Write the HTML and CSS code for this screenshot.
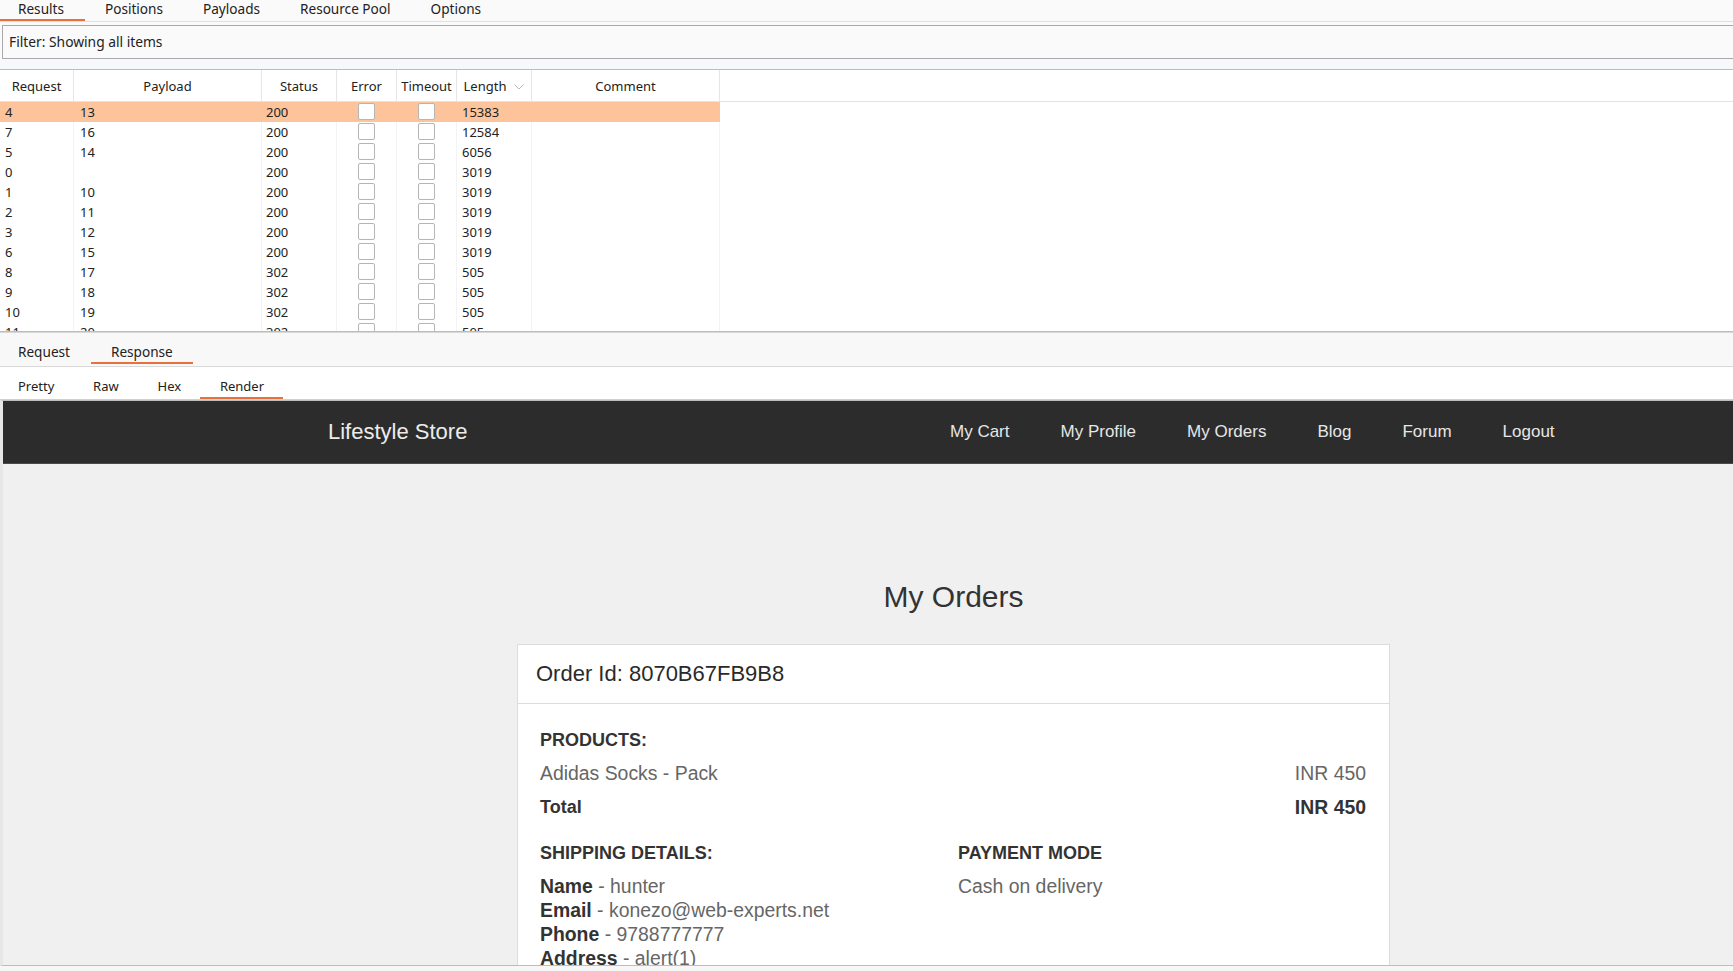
FILE: index.html
```html
<!DOCTYPE html>
<html lang="en">
<head>
<meta charset="utf-8">
<title>Intruder results</title>
<link rel="stylesheet" href="styles.css">
</head>
<body>
<div class="app">
  <div class="tabbar top-tabs">
    <span class="tab active">Results</span>
    <span class="tab">Positions</span>
    <span class="tab">Payloads</span>
    <span class="tab">Resource Pool</span>
    <span class="tab">Options</span>
  </div>
  <div class="filter-wrap">
    <div class="filter">Filter: Showing all items</div>
  </div>
  <div class="spacer"></div>
  <div class="table-wrap">
    <div class="thead">
      <div class="th">Request</div>
      <div class="th">Payload</div>
      <div class="th">Status</div>
      <div class="th">Error</div>
      <div class="th">Timeout</div>
      <div class="th">Length <svg class="chev" width="10" height="6" viewBox="0 0 10 6"><polyline points="0.5,0.5 5,5 9.5,0.5" fill="none" stroke="#b9b9b9" stroke-width="1"/></svg></div>
      <div class="th">Comment</div>
      <div class="th last"></div>
    </div>
    <div class="tbody">
      <div class="tr sel"><div class="td c-req">4</div><div class="td c-pay">13</div><div class="td c-st">200</div><div class="td c-cb"><span class="cb"></span></div><div class="td c-cb"><span class="cb"></span></div><div class="td c-len">15383</div><div class="td"></div></div>
      <div class="tr"><div class="td c-req">7</div><div class="td c-pay">16</div><div class="td c-st">200</div><div class="td c-cb"><span class="cb"></span></div><div class="td c-cb"><span class="cb"></span></div><div class="td c-len">12584</div><div class="td"></div></div>
      <div class="tr"><div class="td c-req">5</div><div class="td c-pay">14</div><div class="td c-st">200</div><div class="td c-cb"><span class="cb"></span></div><div class="td c-cb"><span class="cb"></span></div><div class="td c-len">6056</div><div class="td"></div></div>
      <div class="tr"><div class="td c-req">0</div><div class="td c-pay"></div><div class="td c-st">200</div><div class="td c-cb"><span class="cb"></span></div><div class="td c-cb"><span class="cb"></span></div><div class="td c-len">3019</div><div class="td"></div></div>
      <div class="tr"><div class="td c-req">1</div><div class="td c-pay">10</div><div class="td c-st">200</div><div class="td c-cb"><span class="cb"></span></div><div class="td c-cb"><span class="cb"></span></div><div class="td c-len">3019</div><div class="td"></div></div>
      <div class="tr"><div class="td c-req">2</div><div class="td c-pay">11</div><div class="td c-st">200</div><div class="td c-cb"><span class="cb"></span></div><div class="td c-cb"><span class="cb"></span></div><div class="td c-len">3019</div><div class="td"></div></div>
      <div class="tr"><div class="td c-req">3</div><div class="td c-pay">12</div><div class="td c-st">200</div><div class="td c-cb"><span class="cb"></span></div><div class="td c-cb"><span class="cb"></span></div><div class="td c-len">3019</div><div class="td"></div></div>
      <div class="tr"><div class="td c-req">6</div><div class="td c-pay">15</div><div class="td c-st">200</div><div class="td c-cb"><span class="cb"></span></div><div class="td c-cb"><span class="cb"></span></div><div class="td c-len">3019</div><div class="td"></div></div>
      <div class="tr"><div class="td c-req">8</div><div class="td c-pay">17</div><div class="td c-st">302</div><div class="td c-cb"><span class="cb"></span></div><div class="td c-cb"><span class="cb"></span></div><div class="td c-len">505</div><div class="td"></div></div>
      <div class="tr"><div class="td c-req">9</div><div class="td c-pay">18</div><div class="td c-st">302</div><div class="td c-cb"><span class="cb"></span></div><div class="td c-cb"><span class="cb"></span></div><div class="td c-len">505</div><div class="td"></div></div>
      <div class="tr"><div class="td c-req">10</div><div class="td c-pay">19</div><div class="td c-st">302</div><div class="td c-cb"><span class="cb"></span></div><div class="td c-cb"><span class="cb"></span></div><div class="td c-len">505</div><div class="td"></div></div>
      <div class="tr"><div class="td c-req">11</div><div class="td c-pay">20</div><div class="td c-st">302</div><div class="td c-cb"><span class="cb"></span></div><div class="td c-cb"><span class="cb"></span></div><div class="td c-len">505</div><div class="td"></div></div>
    </div>
  </div>
  <div class="hline"></div>
  <div class="tabbar rr-tabs">
    <span class="tab">Request</span>
    <span class="tab active">Response</span>
  </div>
  <div class="tabbar view-tabs">
    <span class="tab">Pretty</span>
    <span class="tab">Raw</span>
    <span class="tab">Hex</span>
    <span class="tab active">Render</span>
  </div>
  <div class="render">
    <nav class="navbar">
      <div class="brand">Lifestyle Store</div>
      <ul class="nav">
        <li>My Cart</li>
        <li>My Profile</li>
        <li>My Orders</li>
        <li>Blog</li>
        <li>Forum</li>
        <li>Logout</li>
      </ul>
    </nav>
    <main class="page">
      <h1 class="title">My Orders</h1>
      <div class="card">
        <div class="card-head">Order Id: 8070B67FB9B8</div>
        <div class="card-body">
          <div class="sec-title">PRODUCTS:</div>
          <div class="line item"><span>Adidas Socks - Pack</span><span>INR 450</span></div>
          <div class="line total"><span>Total</span><span class="amt">INR 450</span></div>
          <div class="cols">
            <div class="col">
              <div class="sec-title">SHIPPING DETAILS:</div>
              <div class="details">
                <div><b>Name</b> - hunter</div>
                <div><b>Email</b> - konezo@web-experts.net</div>
                <div><b>Phone</b> - 9788777777</div>
                <div><b>Address</b> - alert(1)</div>
              </div>
            </div>
            <div class="col">
              <div class="sec-title">PAYMENT MODE</div>
              <div class="details"><div>Cash on delivery</div></div>
            </div>
          </div>
        </div>
      </div>
    </main>
  </div>
</div>
</body>
</html>
```
FILE: styles.css
```css
* { box-sizing: border-box; }
html, body { margin: 0; padding: 0; }
body {
  width: 1733px;
  height: 971px;
  overflow: hidden;
  background: #f7f7f7;
  font-family: "Noto Sans", "DejaVu Sans", sans-serif;
  font-size: 13px;
  color: #222;
}
.app { width: 1733px; height: 971px; overflow: hidden; display: flex; flex-direction: column; }

/* tab bars */
.tabbar { display: flex; flex: none; }
.tab { padding: 0 20px; line-height: 16px; border-bottom: 2px solid transparent; white-space: nowrap; font-size: 13.6px; }
.tab.active { border-bottom-color: #e8703d; }

.top-tabs { background: #fafafa; border-bottom: 1px solid #e0e0e0; height: 22px; }
.top-tabs .tab { padding: 0 20px 1px; line-height: 18px; }
.top-tabs .tab:first-child { padding-left: 18px; padding-right: 21px; }

.filter-wrap { background: #fafafa; padding: 3px 0 0 2px; flex: none; }
.filter {
  height: 34px;
  border: 1px solid #a9a9a9;
  border-right: none;
  background: #fafafa;
  padding-left: 6px;
  line-height: 32px;
  font-size: 13.8px;
}
.spacer { height: 10px; background: #f7f8fb; flex: none; }

/* table */
.table-wrap {
  height: 263px;
  flex: none;
  border-top: 1px solid #aebfdc;
  border-bottom: 1px solid #aebfdc;
  background: #fff;
  overflow: hidden;
}
.thead {
  display: grid;
  grid-template-columns: 74px 188px 75px 60px 60px 75px 188px 1fr;
  height: 32px;
  border-bottom: 1px solid #e3e3e3;
}
.th {
  border-right: 1px solid #e6e6e6;
  text-align: center;
  padding-top: 2px;
  line-height: 29px;
  display: flex;
  align-items: center;
  justify-content: center;
  gap: 8px;
}
.th.last { border-right: none; }
.chev { margin-top: 1px; }
.tr {
  display: grid;
  grid-template-columns: 74px 188px 75px 60px 60px 75px 188px;
  width: 720px;
  height: 20px;
  line-height: 20px;
}
.td { border-right: 1px solid #f3f3f3; white-space: nowrap; }
.tr.sel .td { background: #fdc49b; border-right-color: #fdc49b; }
.c-req { padding-left: 5px; }
.c-pay { padding-left: 6px; }
.c-st { padding-left: 4px; }
.c-len { padding-left: 5px; }
.c-cb { display: flex; align-items: center; justify-content: center; }
.cb {
  width: 17px;
  height: 17px;
  border: 1px solid #b5b5b5;
  border-radius: 2px;
  background: #fff;
  margin-top: -1px;
}

.hline { height: 1px; background: #d8d8d8; flex: none; }

.rr-tabs { background: #f8f8f8; padding-bottom: 2px; border-bottom: 1px solid #d9d9d9; }
.rr-tabs .tab { padding: 9px 20px 0; line-height: 20px; }
.rr-tabs .tab:first-child { padding-left: 18px; padding-right: 21px; }

.view-tabs { background: #fff; border-bottom: 1px solid #d0d0d0; }
.view-tabs .tab { padding: 9px 19.4px 0; line-height: 21px; font-size: 13px; }
.view-tabs .tab:first-child { padding-left: 18px; }

/* rendered page */
.render {
  height: 566px;
  flex: none;
  background: #f0f0f0;
  border-top: 1px solid #bdbdbd;
  border-left: 3px solid #e7e7e7;
  border-bottom: 1px solid #bdbdbd;
  overflow: hidden;
  font-family: "Liberation Sans", Arial, sans-serif;
  color: #333;
}
.navbar {
  height: 63px;
  background: #2c2c2c;
  border-bottom: 1px solid #4a4a4a;
  display: flex;
  align-items: center;
  padding-left: 325px;
}
.brand { width: 622px; font-size: 22px; color: #ececec; }
.nav { list-style: none; margin: 0; padding: 0; display: flex; gap: 51px; }
.nav li { font-size: 17px; color: #e6e6e6; }

.page { padding-left: 514px; }
.title {
  width: 873px;
  margin: 116px 0 30px;
  text-align: center;
  font-size: 30px;
  line-height: 34px;
  font-weight: normal;
  color: #333;
}
.card { width: 873px; background: #fff; border: 1px solid #dcdcdc; }
.card-head {
  height: 59px;
  border-bottom: 1px solid #dcdcdc;
  padding-left: 18px;
  line-height: 58px;
  font-size: 22px;
  color: #2a2a2a;
}
.card-body { padding: 24px 23px 0 22px; font-size: 18px; line-height: 24px; }
.sec-title { font-weight: bold; color: #333; }
.line { display: flex; justify-content: space-between; margin-top: 10px; }
.line.item { margin-top: 9px; }
.item { color: #666; font-size: 19.4px; }
.total { font-weight: bold; color: #333; }
.total .amt { font-size: 19.4px; }
.cols { display: flex; margin-top: 22px; }
.col { width: 418px; flex: none; }
.details { margin-top: 9px; color: #666; font-size: 19.4px; }
.details b { color: #333; }
```
